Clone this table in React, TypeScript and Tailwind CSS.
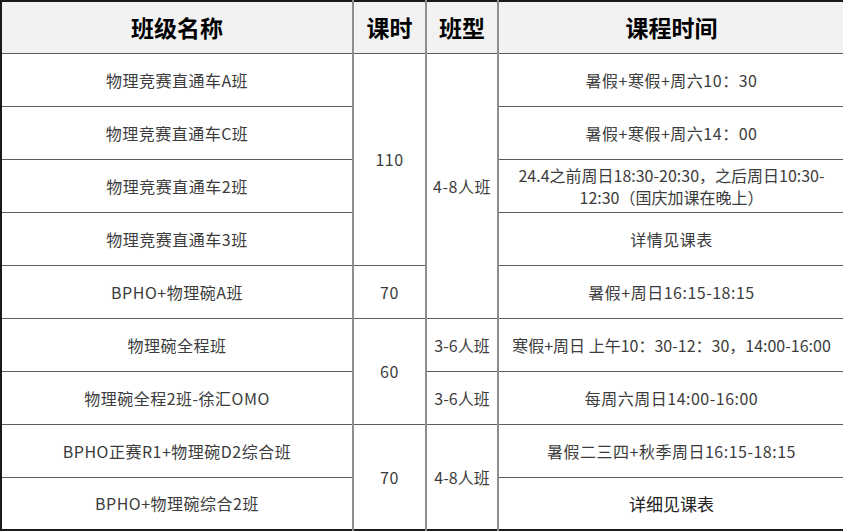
import React from "react";

const cell =
  "border-y border-y-[#5c5c5c] border-x-2 border-x-[#8e8e8e] text-center align-middle p-0";
const body = `${cell} text-[16px] tracking-[0.5px] text-[#3c3c3c]`;
const head = `${cell} border-t-2 border-t-[#1a1a1a] text-[23px] font-bold text-black`;

export default function App() {
  return (
    <div
      className="w-[843px] h-[531px] bg-white overflow-hidden"
      style={{ fontFamily: '"Noto Sans CJK SC", "Noto Sans", sans-serif' }}
    >
      <table className="table-fixed border-collapse w-[843px] border-t-2 border-t-[#1a1a1a] border-l-2 border-l-[#1a1a1a] border-b-2 border-b-[#1a1a1a]">
        <colgroup>
          <col className="w-[352px]" />
          <col className="w-[73px]" />
          <col className="w-[72px]" />
          <col className="w-[346px]" />
        </colgroup>
        <thead>
          <tr className="h-[52px] bg-[#f2f2f2]">
            <th className={`${head} border-l-2 border-l-[#1a1a1a]`}>班级名称</th>
            <th className={head}>课时</th>
            <th className={head}>班型</th>
            <th className={`${head} border-r-0`}>课程时间</th>
          </tr>
        </thead>
        <tbody>
          <tr className="h-[53px]">
            <td className={`${body} border-l-2 border-l-[#1a1a1a]`}>物理竞赛直通车A班</td>
            <td className={body} rowSpan={4}>110</td>
            <td className={body} rowSpan={5}>4-8人班</td>
            <td className={`${body} border-r-0`}>暑假+寒假+周六10：30</td>
          </tr>
          <tr className="h-[53px]">
            <td className={`${body} border-l-2 border-l-[#1a1a1a]`}>物理竞赛直通车C班</td>
            <td className={`${body} border-r-0`}>暑假+寒假+周六14：00</td>
          </tr>
          <tr className="h-[53px]">
            <td className={`${body} border-l-2 border-l-[#1a1a1a]`}>物理竞赛直通车2班</td>
            <td className={`${body} border-r-0 leading-[22px] tracking-[0px]`}>
              24.4之前周日18:30-20:30，之后周日10:30-
              <br />
              12:30（国庆加课在晚上）
            </td>
          </tr>
          <tr className="h-[53px]">
            <td className={`${body} border-l-2 border-l-[#1a1a1a]`}>物理竞赛直通车3班</td>
            <td className={`${body} border-r-0`}>详情见课表</td>
          </tr>
          <tr className="h-[53px]">
            <td className={`${body} border-l-2 border-l-[#1a1a1a]`}>BPHO+物理碗A班</td>
            <td className={body}>70</td>
            <td className={`${body} border-r-0`}>暑假+周日16:15-18:15</td>
          </tr>
          <tr className="h-[53px]">
            <td className={`${body} border-l-2 border-l-[#1a1a1a]`}>物理碗全程班</td>
            <td className={body} rowSpan={2}>60</td>
            <td className={`${body} tracking-[0px]`}>3-6人班</td>
            <td className={`${body} border-r-0 whitespace-nowrap tracking-[0px]`}>寒假+周日 上午10：30-12：30，14:00-16:00</td>
          </tr>
          <tr className="h-[53px]">
            <td className={`${body} border-l-2 border-l-[#1a1a1a]`}>物理碗全程2班-徐汇OMO</td>
            <td className={`${body} tracking-[0px]`}>3-6人班</td>
            <td className={`${body} border-r-0`}>每周六周日14:00-16:00</td>
          </tr>
          <tr className="h-[53px]">
            <td className={`${body} border-l-2 border-l-[#1a1a1a]`}>BPHO正赛R1+物理碗D2综合班</td>
            <td className={body} rowSpan={2}>70</td>
            <td className={`${body} tracking-[0px]`} rowSpan={2}>4-8人班</td>
            <td className={`${body} border-r-0`}>暑假二三四+秋季周日16:15-18:15</td>
          </tr>
          <tr className="h-[53px]">
            <td className={`${body} border-l-2 border-l-[#1a1a1a] border-b-2 border-b-[#1a1a1a]`}>BPHO+物理碗综合2班</td>
            <td className={`${cell} border-r-0 border-b-2 border-b-[#1a1a1a] text-[17px] text-[#222]`}>详细见课表</td>
          </tr>
        </tbody>
      </table>
    </div>
  );
}
